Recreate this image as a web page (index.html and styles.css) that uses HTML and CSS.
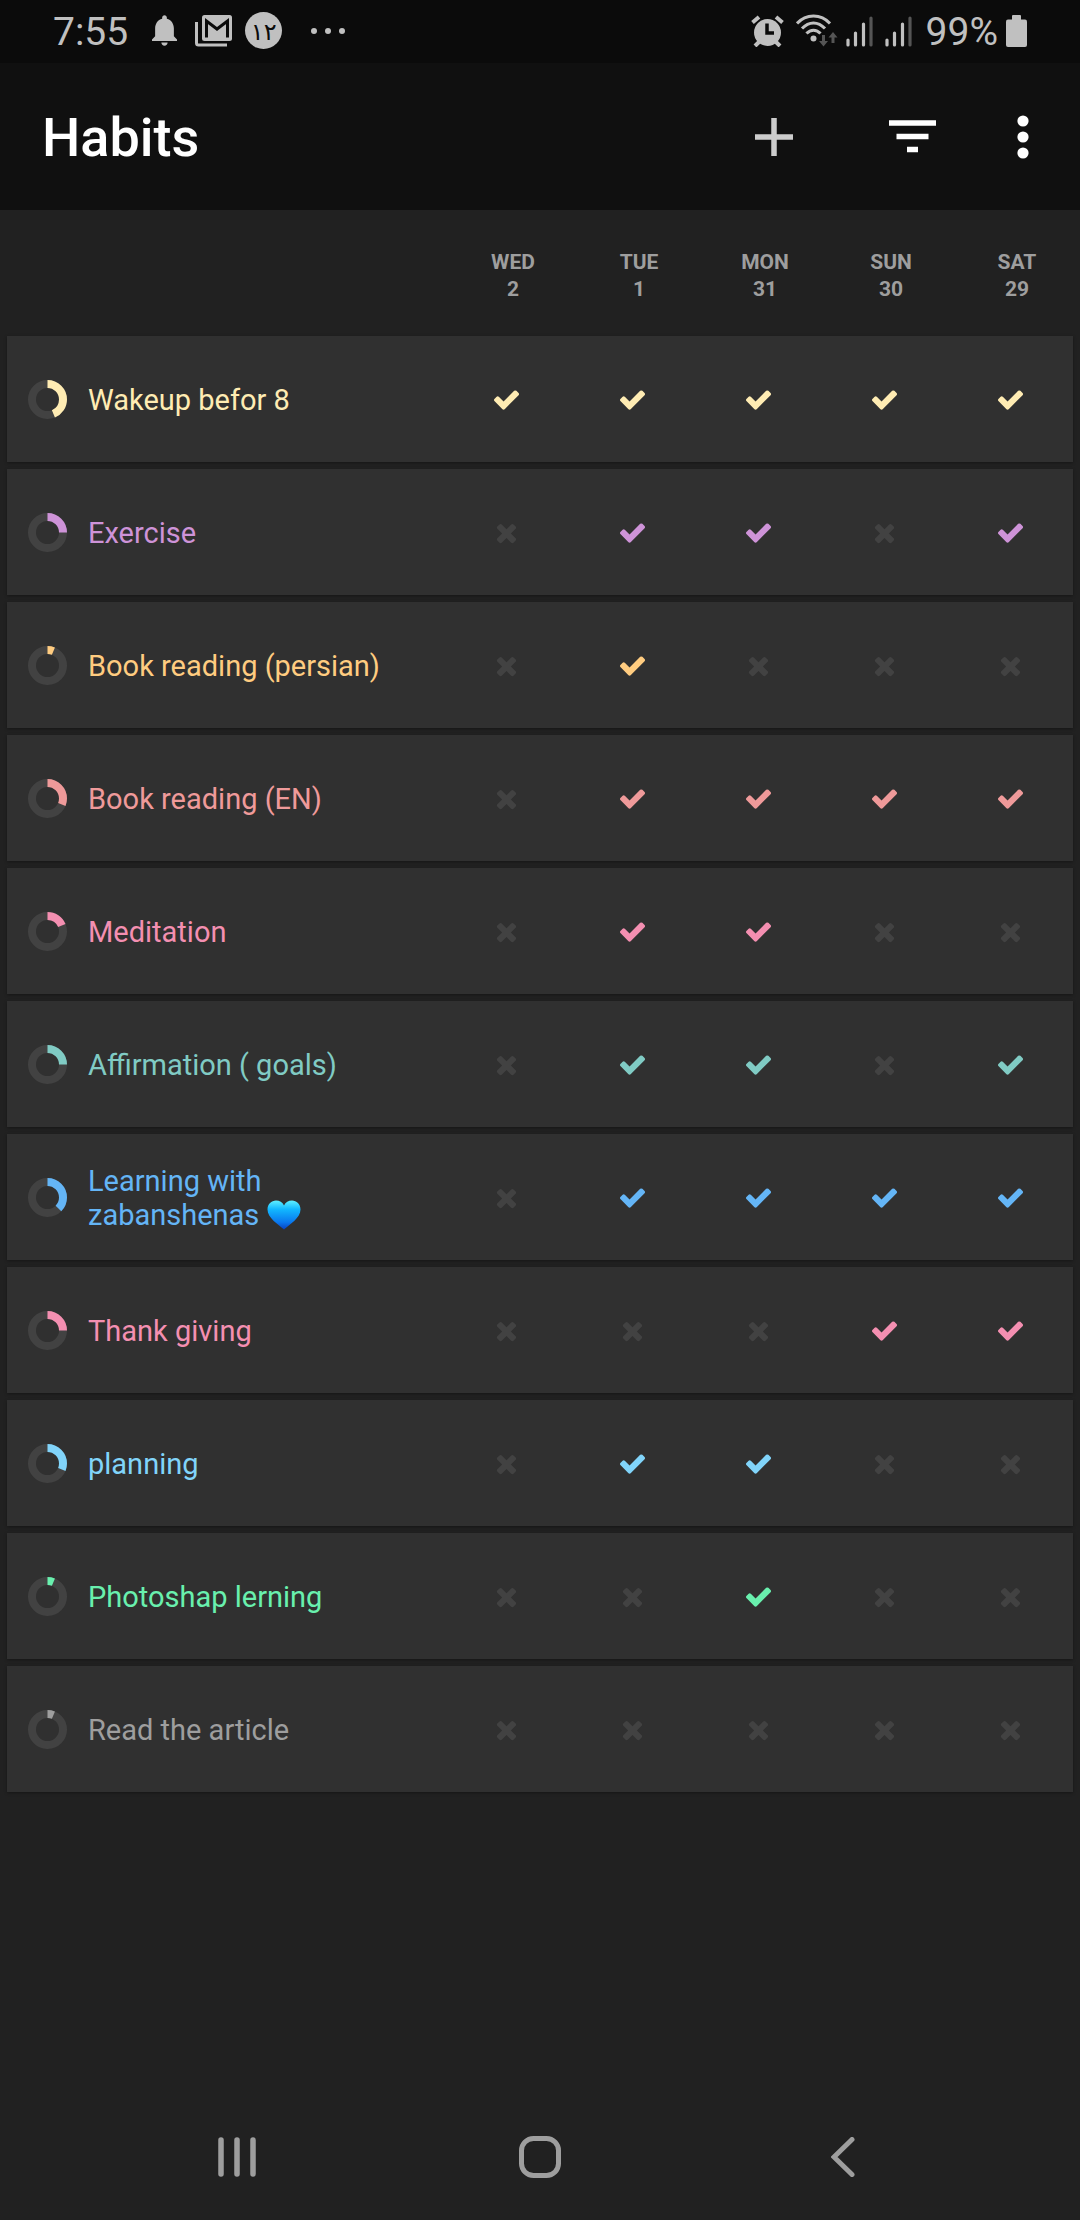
FILE: index.html
```html
<!DOCTYPE html>
<html lang="en">
<head>
<meta charset="utf-8">
<meta name="viewport" content="width=device-width, initial-scale=1">
<title>Habits</title>
<link rel="stylesheet" href="styles.css">
</head>
<body>
<svg class="sprite" aria-hidden="true">
  <symbol id="check" viewBox="0 0 1792 1792"><path d="M1671 566q0 40-28 68l-724 724-136 136q-28 28-68 28t-68-28l-136-136-362-362q-28-28-28-68t28-68l136-136q28-28 68-28t68 28l294 295 656-657q28-28 68-28t68 28l136 136q28 28 28 68z"/></symbol>
  <symbol id="cross" viewBox="0 0 1792 1792"><path d="M1490 1322q0 40-28 68l-136 136q-28 28-68 28t-68-28l-294-294-294 294q-28 28-68 28t-68-28l-136-136q-28-28-28-68t28-68l294-294-294-294q-28-28-28-68t28-68l136-136q28-28 68-28t68 28l294 294 294-294q28-28 68-28t68 28l136 136q28 28 28 68t-28 68l-294 294 294 294q28 28 28 68z"/></symbol>
  <symbol id="signal" viewBox="0 0 27 32"><path d="M2 25v5M9.500 18v12M17.500 9v21" stroke="#c0c0c0" stroke-width="3.200" stroke-linecap="round"/><path d="M25 3v27" stroke="#555" stroke-width="3.200" stroke-linecap="round"/></symbol>
</svg>

<div class="status">
  <div class="status-left">
    <span class="status-text">7:55</span>
    <svg class="bell" viewBox="4 2.500 16 19.500" width="25" height="31"><path d="M12 22c1.100 0 2-.9 2-2h-4c0 1.100.89 2 2 2zm6-6v-5c0-3.070-1.640-5.640-4.500-6.320V4c0-.83-.67-1.500-1.500-1.500s-1.500.67-1.500 1.500v.68C7.630 5.360 6 7.920 6 11v5l-2 2v1h16v-1l-2-2z" fill="#c0c0c0"/></svg>
    <svg class="mail" viewBox="0 0 37 32" width="37" height="32"><path d="M1.500 7v21a2 2 0 0 0 2 2H32" fill="none" stroke="#c0c0c0" stroke-width="3"/><rect x="7" y="0" width="30" height="26" rx="2.500" fill="#c0c0c0"/><path d="M11.500 22.500V6l10.500 8 10.500-8v16.500" fill="none" stroke="#0b0b0b" stroke-width="3"/></svg>
    <span class="badge" lang="fa">۱۲</span>
    <svg class="dots" viewBox="0 0 34 6" width="34" height="6" fill="#c0c0c0"><circle cx="3" cy="3" r="3"/><circle cx="17" cy="3" r="3"/><circle cx="31" cy="3" r="3"/></svg>
  </div>
  <div class="status-right">
    <svg viewBox="0 0 33 32" width="33" height="32"><circle cx="16.500" cy="17.500" r="13.500" fill="#c0c0c0"/><path d="M1.500 7.500 8 2M31.500 7.500 25 2M8 27l-4 4M25 27l4 4" stroke="#c0c0c0" stroke-width="4"/><path d="M16 8.500V18h7" fill="none" stroke="#0b0b0b" stroke-width="3.500"/></svg>
    <svg class="wifi" viewBox="0 0 42 34" width="42" height="34" fill="none"><path d="M1 9.500C10-.5 25-.5 34 9.500M6 14.500c7-7.500 16-7.500 23 0M10.500 19.500c4-4.500 10-4.500 14 0" stroke="#c0c0c0" stroke-width="3"/><circle cx="17.500" cy="24.500" r="3" fill="#c0c0c0"/><path d="M27.500 21v8M37 29v-8" stroke="#555" stroke-width="3"/><path d="M23 27h9l-4.500 5.500zM32.500 23.500h9L37 18z" fill="#555"/></svg>
    <svg width="27" height="32"><use href="#signal"/></svg>
    <svg width="27" height="32"><use href="#signal"/></svg>
    <span class="status-text percent">99%</span>
    <svg viewBox="0 0 21 32" width="21" height="32" fill="#c0c0c0"><rect x="6" width="9" height="6" rx="1"/><rect y="4.500" width="21" height="27.500" rx="2"/></svg>
  </div>
</div>

<header class="toolbar">
  <h1>Habits</h1>
  <button class="tool" aria-label="Add habit"><svg viewBox="0 0 38 38" width="38" height="38"><path d="M19 0v38M0 19h38" stroke="#ccc" stroke-width="5.500"/></svg></button>
  <button class="tool" aria-label="Filter"><svg viewBox="0 0 47 33" width="47" height="33"><path d="M0 3h47M7.500 16.500h32M18 29.500h11" stroke="#fff" stroke-width="5.500"/></svg></button>
  <button class="tool more" aria-label="More options"><svg viewBox="0 0 12 44" width="12" height="44" fill="#fff"><circle cx="6" cy="6" r="5.600"/><circle cx="6" cy="22" r="5.600"/><circle cx="6" cy="38" r="5.600"/></svg></button>
</header>

<main>
  <table class="habits">
    <thead>
      <tr><td></td><th scope="col">WED<br>2</th><th scope="col">TUE<br>1</th><th scope="col">MON<br>31</th><th scope="col">SUN<br>30</th><th scope="col">SAT<br>29</th></tr>
    </thead>
    <tbody id="rows"></tbody>
  </table>
</main>

<nav class="navbar" aria-label="System">
  <button aria-label="Recent apps"><svg viewBox="0 0 38 40" width="38" height="40"><path d="M3 3v34M19 3v34M35 3v34" stroke="#9e9e9e" stroke-width="5.500" stroke-linecap="round"/></svg></button>
  <button aria-label="Home"><svg viewBox="0 0 42 42" width="42" height="42"><rect x="2.500" y="2.500" width="37" height="37" rx="12" fill="none" stroke="#9e9e9e" stroke-width="5"/></svg></button>
  <button aria-label="Back"><svg viewBox="0 0 24 40" width="24" height="40"><path d="M21 2.500 3 20l18 17.500" fill="none" stroke="#9e9e9e" stroke-width="5" stroke-linecap="round"/></svg></button>
</nav>
<script src="habits.js"></script>
</body>
</html>
```

FILE: styles.css
```css
* { box-sizing: border-box; }

body {
  margin: 0;
  min-height: 100vh;
  display: flex;
  flex-direction: column;
  background: #212121;
  font-family: Roboto, "Noto Sans", sans-serif;
}

button {
  display: flex;
  align-items: center;
  justify-content: center;
  margin: 0;
  padding: 0;
  border: 0;
  background: none;
  color: inherit;
  cursor: pointer;
}

svg { flex: none; }

.sprite {
  position: absolute;
  width: 0;
  height: 0;
}

.status {
  display: flex;
  align-items: center;
  justify-content: space-between;
  height: 63px;
  padding: 0 53px 2px;
  background: #0b0b0b;
}

.status-left,
.status-right {
  display: flex;
  align-items: center;
}

.status-right { gap: 12px; }

.status-text {
  padding-top: 2px;
  color: #c0c0c0;
  font-size: 39px;
  line-height: 44px;
}

.bell { margin-left: 24px; }
.mail { margin-left: 18px; }

.badge {
  width: 37px;
  height: 37px;
  margin-left: 13px;
  border-radius: 50%;
  background: #c0c0c0;
  color: #0b0b0b;
  font-family: "DejaVu Sans", sans-serif;
  font-size: 24px;
  line-height: 40px;
  text-align: center;
}

.dots { margin-left: 29px; }
.wifi { margin-right: -4px; }
.percent { margin: 0 -4px 0 2px; }

.toolbar {
  display: flex;
  align-items: stretch;
  height: 147px;
  padding: 0 16px 0 42px;
  background: #101010;
}

.toolbar h1 {
  flex: 1;
  margin: 0;
  color: #fff;
  font-size: 54px;
  font-weight: 500;
  line-height: 150px;
}

.tool { width: 138px; }
.tool.more { width: 83px; }

.habits,
.habits thead,
.habits tbody { display: block; }

.habits tr {
  display: grid;
  grid-template-columns: 1fr repeat(5, 126px);
}

.habits th,
.habits td { padding: 0; }

.habits thead tr {
  height: 126px;
  padding-top: 39px;
}

.habits thead th {
  color: #9e9e9e;
  font-size: 21px;
  font-weight: 700;
  line-height: 27px;
  text-align: center;
}

.habits tbody {
  display: grid;
  gap: 7px;
  padding: 0 7px 7px;
}

.habits tbody tr {
  min-height: 126px;
  background: #303030;
  box-shadow: 0 1px 3px rgba(0, 0, 0, 0.35);
}

.habits .name {
  display: flex;
  align-items: center;
  gap: 21px;
  padding-left: 21px;
  font-size: 29px;
  font-weight: 400;
  line-height: 34px;
  text-align: left;
}

.name span { padding-top: 2px; }

.habits tbody td { display: grid; }

.ring {
  fill: none;
  stroke-width: 8px;
}

.ring .track { stroke: #424242; }
.ring .score { stroke: currentColor; }

.mark { fill: currentColor; }
.missed { color: #424242; }

.keep { white-space: nowrap; }
.heart { vertical-align: -5px; }

.yellow { color: #ffecb3; }
.purple { color: #ce93d8; }
.amber { color: #ffcc80; }
.red { color: #ef9a9a; }
.pink { color: #f48fb1; }
.teal { color: #80cbc4; }
.blue { color: #64b5f6; }
.sky { color: #81d4fa; }
.green { color: #69f0ae; }
.grey { color: #9e9e9e; }

.navbar {
  display: grid;
  grid-template-columns: repeat(3, 1fr);
  height: 126px;
  margin-top: auto;
  padding: 0 86px;
}
```

FILE: habits.js
```js
const heart = '<svg class="heart" role="img" aria-label="blue heart" viewBox="0 0 34 30" width="34" height="30"><defs><linearGradient id="hg" x1="0" y1="0" x2="0" y2="1"><stop offset="0" stop-color="#5ff0ff"/><stop offset=".3" stop-color="#12b8ff"/><stop offset=".75" stop-color="#0a78ee"/><stop offset="1" stop-color="#0a3fc0"/></linearGradient></defs><path d="M17 29.500C11 24 .5 18 .5 9.500.5 4 4.500.5 9 .5c3.500 0 6.500 1.800 8 5 1.500-3.200 4.500-5 8-5 4.500 0 8.500 3.500 8.500 9C33.500 18 23 24 17 29.500z" fill="url(#hg)"/></svg>';

// name, colour, score in percent, one digit per day (1 = done)
const habits = [
  ['Wakeup befor 8', 'yellow', 43.75, '11111'],
  ['Exercise', 'purple', 25, '01101'],
  ['Book reading (persian)', 'amber', 6.25, '01000'],
  ['Book reading (EN)', 'red', 31.25, '01111'],
  ['Meditation', 'pink', 18.75, '01100'],
  ['Affirmation ( goals)', 'teal', 25, '01101'],
  ['Learning with <span class="keep">zabanshenas ' + heart + '</span>', 'blue', 37.5, '01111'],
  ['Thank giving', 'pink', 25, '00011'],
  ['planning', 'sky', 31.25, '01100'],
  ['Photoshap lerning', 'green', 6.25, '00100'],
  ['Read the article', 'grey', 6.25, '00000']
];

const cell = day => {
  const done = day === '1';
  return `<td><button class="${done ? 'done' : 'missed'}" aria-label="${done ? 'Done' : 'Not done'}">` +
    `<svg class="mark" width="29" height="29"><use href="#${done ? 'check' : 'cross'}"/></svg></button></td>`;
};

document.getElementById('rows').innerHTML = habits.map(([name, colour, score, days]) =>
  `<tr class="${colour}"><th scope="row" class="name">` +
  `<svg class="ring" viewBox="0 0 39 39" width="39" height="39"><circle class="track" cx="19.5" cy="19.5" r="15.5"/>` +
  `<circle class="score" cx="19.5" cy="19.5" r="15.5" pathLength="100" stroke-dasharray="${score} 100" transform="rotate(-90 19.5 19.5)"/></svg>` +
  `<span>${name}</span></th>${[...days].map(cell).join('')}</tr>`).join('');
```
